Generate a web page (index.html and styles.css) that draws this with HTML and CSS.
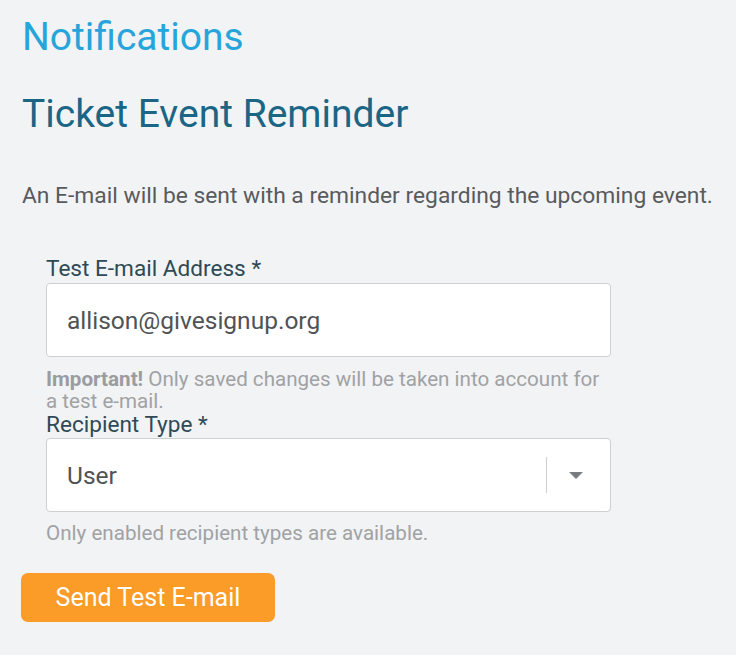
FILE: index.html
```html
<!DOCTYPE html>
<html>
<head>
<meta charset="utf-8">
<link rel="stylesheet" href="styles.css">
</head>
<body>
<div class="page">
  <h1 class="title">Notifications</h1>
  <h2 class="subtitle">Ticket Event Reminder</h2>
  <p class="intro">An E-mail will be sent with a reminder regarding the upcoming event.</p>
  <div class="form">
    <label class="label">Test E-mail Address *</label>
    <div class="input">allison@givesignup.org</div>
    <p class="help"><b>Important!</b> Only saved changes will be taken into account for a test e-mail.</p>
    <label class="label">Recipient Type *</label>
    <div class="select">
      <span class="select-value">User</span>
      <span class="sep"></span>
      <span class="arrow"></span>
    </div>
    <p class="help help2">Only enabled recipient types are available.</p>
  </div>
  <button class="btn">Send Test E-mail</button>
</div>
</body>
</html>
```
FILE: styles.css
```css
html, body { margin: 0; padding: 0; }
body {
  background: #f2f3f5;
  font-family: Roboto, "Noto Sans", sans-serif;
  width: 736px;
  height: 655px;
  overflow: hidden;
}
.page { padding: 13px 0 0 22px; }
.title {
  margin: 0;
  font-size: 39px;
  font-weight: 400;
  color: #27a5da;
  line-height: 48px;
}
.subtitle {
  margin: 29px 0 0;
  font-size: 39px;
  font-weight: 400;
  color: #1b6585;
  line-height: 48px;
}
.intro {
  margin: 44px 0 0;
  font-size: 22.8px;
  color: #585b5e;
  line-height: 28px;
  white-space: nowrap;
}
.form {
  margin: 46px 0 0 24px;
  width: 565px;
  display: flex;
  flex-direction: column;
}
.label {
  font-size: 22.6px;
  color: #2e4a56;
  line-height: 26px;
}
.input, .select {
  box-sizing: border-box;
  height: 74px;
  background: #fff;
  border: 1px solid #cdd0d3;
  border-radius: 4px;
  font-size: 24.5px;
  color: #505356;
  display: flex;
  align-items: center;
  padding-left: 20px;
  margin-top: 1px;
}
.help {
  margin: 11px 0 0;
  font-size: 20.6px;
  line-height: 22px;
  color: #a0a2a4;
}
.help b { font-weight: 700; color: #9a9c9e; }
.select { margin-top: 0; }
.select-value { flex: 1; }
.sep {
  width: 1px;
  height: 36px;
  background: #cdd0d3;
  margin-right: 22px;
}
.arrow {
  width: 0; height: 0;
  border-left: 7px solid transparent;
  border-right: 7px solid transparent;
  border-top: 7px solid #7a7d80;
  margin-right: 27px;
}
.help2 { margin-top: 10px; }
.btn {
  display: block;
  margin: 29px 0 0 -1px;
  width: 254px;
  height: 49px;
  background: #fb9b28;
  border: none;
  border-radius: 7px;
  color: #fff;
  font-family: Roboto, sans-serif;
  font-size: 25px;
  padding: 0;
}
```
